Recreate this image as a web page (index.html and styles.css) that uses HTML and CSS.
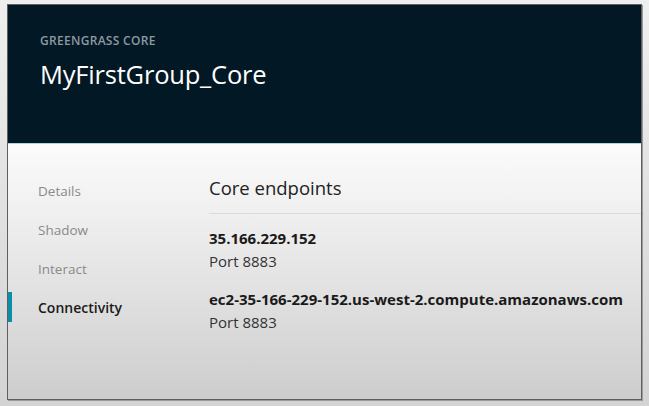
FILE: index.html
```html
<!DOCTYPE html>
<html lang="en">
<head>
    <meta charset="UTF-8">
    <meta name="viewport" content="width=device-width, initial-scale=1.0">
    <title>MyFirstGroup_Core</title>
    <link rel="stylesheet" href="styles.css">
</head>
<body>
    <div class="frame">
        <header class="core-header">
            <div class="eyebrow">GREENGRASS CORE</div>
            <h1>MyFirstGroup_Core</h1>
        </header>

        <div class="core-body">
            <ul class="side-nav">
                <li><a href="#">Details</a></li>
                <li><a href="#">Shadow</a></li>
                <li><a href="#">Interact</a></li>
                <li class="active"><a href="#">Connectivity</a></li>
            </ul>

            <main class="endpoints">
                <h2>Core endpoints</h2>
                <div class="endpoint">
                    <div class="host">35.166.229.152</div>
                    <div class="port">Port 8883</div>
                </div>
                <div class="endpoint">
                    <div class="host">ec2-35-166-229-152.us-west-2.compute.amazonaws.com</div>
                    <div class="port">Port 8883</div>
                </div>
            </main>
        </div>
    </div>
</body>
</html>
```

FILE: styles.css
```css
/* Général */
* {
    margin: 0;
    padding: 0;
    box-sizing: border-box;
}

html, body {
    height: 100%;
}

body {
    font-family: 'Open Sans', 'Noto Sans', sans-serif;
    background: linear-gradient(#efefef, #d3d3d3);
    color: #1d1d1d;
    padding: 4px 0 0 7px;
}

/* Cadre */
.frame {
    width: 635px;
    height: 396px;
    border: 1px solid #5f5f5f;
    box-shadow: 1px 1px 0 #9a9a9a;
    display: flex;
    flex-direction: column;
}

/* En-tête */
.core-header {
    height: 139px;
    background-color: #021824;
    border-bottom: 1px solid #a9d6e2;
    padding: 28px 0 0 32px;
}

.eyebrow {
    color: #8d99a2;
    font-size: 12px;
    font-weight: 600;
    letter-spacing: 0.3px;
    line-height: 16px;
}

.core-header h1 {
    color: #fff;
    font-size: 25.5px;
    font-weight: 400;
    line-height: 34px;
    margin-top: 8px;
    letter-spacing: -0.2px;
}

/* Contenu */
.core-body {
    flex: 1;
    display: flex;
    background: linear-gradient(#fbfbfb, #ececec 35%, #cdcdcd);
}

.side-nav {
    list-style: none;
    width: 201px;
    padding-top: 31px;
    display: flex;
    flex-direction: column;
    gap: 9px;
}

.side-nav li {
    height: 30px;
    line-height: 30px;
    padding-left: 26px;
    border-left: 4px solid transparent;
}

.side-nav a {
    text-decoration: none;
    color: #8a8a8a;
    font-size: 13.5px;
}

.side-nav li.active {
    border-left-color: #0b8fa9;
}

.side-nav li.active a {
    color: #1a1a1a;
    font-weight: 600;
    font-size: 14px;
}

.endpoints {
    flex: 1;
    padding-top: 32px;
}

.endpoints h2 {
    font-size: 18.5px;
    font-weight: 400;
    line-height: 24px;
    color: #222;
    padding-bottom: 13px;
    border-bottom: 1px solid #dadada;
    margin-bottom: 13px;
}

.endpoint {
    font-size: 15px;
    line-height: 23px;
    margin-bottom: 15px;
}

.endpoint .host {
    font-weight: 700;
    color: #1a1a1a;
}

.endpoint .port {
    color: #333;
}
```
